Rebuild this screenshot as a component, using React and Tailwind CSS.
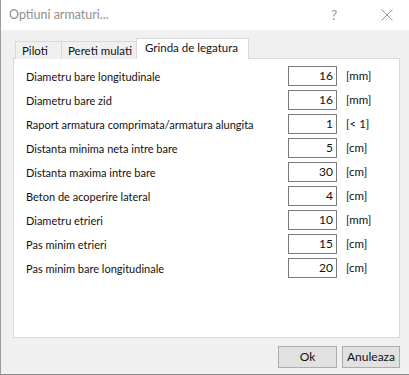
import React from "react";

const rows = [
  ["Diametru bare longitudinale", "16", "[mm]"],
  ["Diametru bare zid", "16", "[mm]"],
  ["Raport armatura comprimata/armatura alungita", "1", "[< 1]"],
  ["Distanta minima neta intre bare", "5", "[cm]"],
  ["Distanta maxima intre bare", "30", "[cm]"],
  ["Beton de acoperire lateral", "4", "[cm]"],
  ["Diametru etrieri", "10", "[mm]"],
  ["Pas minim etrieri", "15", "[cm]"],
  ["Pas minim bare longitudinale", "20", "[cm]"],
];

export default function App() {
  return (
    <div
      className="w-[409px] h-[375px] bg-white flex flex-col border-l border-[#9a9a9a] overflow-hidden text-[12px] text-[#111]"
      style={{ fontFamily: "Lato, 'Liberation Sans', sans-serif" }}
    >
      {/* title bar */}
      <div className="h-[30px] bg-white flex items-center shrink-0">
        <div className="pl-[8px] text-[12.5px] text-[#8f8f8f] flex-1 leading-none">Optiuni armaturi...</div>
        <div className="w-[12px] text-[14px] text-[#9a9a9a] leading-none mr-[38px]">?</div>
        <svg width="12" height="12" viewBox="0 0 12 12" className="mr-[16px]">
          <path d="M0.5 0.5 L11.5 11.5 M11.5 0.5 L0.5 11.5" stroke="#9a9a9a" strokeWidth="1" fill="none" />
        </svg>
      </div>
      {/* body */}
      <div className="flex-1 bg-[#f0f0f0] flex flex-col border-b border-[#8a8a8a] pl-[12px] pr-[9px]">
        {/* tabs */}
        <div className="flex items-end h-[29px] pt-[9px] pl-[2px] relative z-10 text-[11.5px]">
          <div className="w-[47px] h-[18px] border border-b-0 border-[#d9d9d9] bg-[#f0f0f0] pl-[6px] flex items-center leading-none">
            Piloti
          </div>
          <div className="w-[75px] h-[18px] border-t border-r border-[#d9d9d9] bg-[#f0f0f0] pl-[6px] flex items-center leading-none">
            Pereti mulati
          </div>
          <div className="-ml-[1px] w-[113px] h-[21px] border border-b-0 border-[#d9d9d9] bg-white pl-[8px] pb-[2px] flex items-center leading-none">
            Grinda de legatura
          </div>
        </div>
        {/* panel */}
        <div className="-mt-[1px] h-[280px] w-[387px] border border-[#d9d9d9] bg-white pt-[7px] pl-[12px] flex flex-col gap-[4px] text-[11px]">
          {rows.map(([label, val, unit]) => (
            <div key={label} className="flex items-center h-[20px]">
              <div className="w-[262px] leading-none">{label}</div>
              <div className="w-[49px] h-[20px] border border-[#7a7a7a] flex items-center justify-end pr-[3px] leading-none text-[12px]">
                {val}
              </div>
              <div className="pl-[9px] leading-none text-[11.5px]">{unit}</div>
            </div>
          ))}
        </div>
        {/* buttons */}
        <div className="flex justify-end gap-[5px] mt-[8px]">
          <div className="w-[59px] h-[22px] bg-[#e1e1e1] border border-[#adadad] flex items-center justify-center leading-none">
            Ok
          </div>
          <div className="w-[58px] h-[22px] bg-[#e1e1e1] border border-[#adadad] flex items-center justify-center leading-none">
            Anuleaza
          </div>
        </div>
      </div>
    </div>
  );
}
